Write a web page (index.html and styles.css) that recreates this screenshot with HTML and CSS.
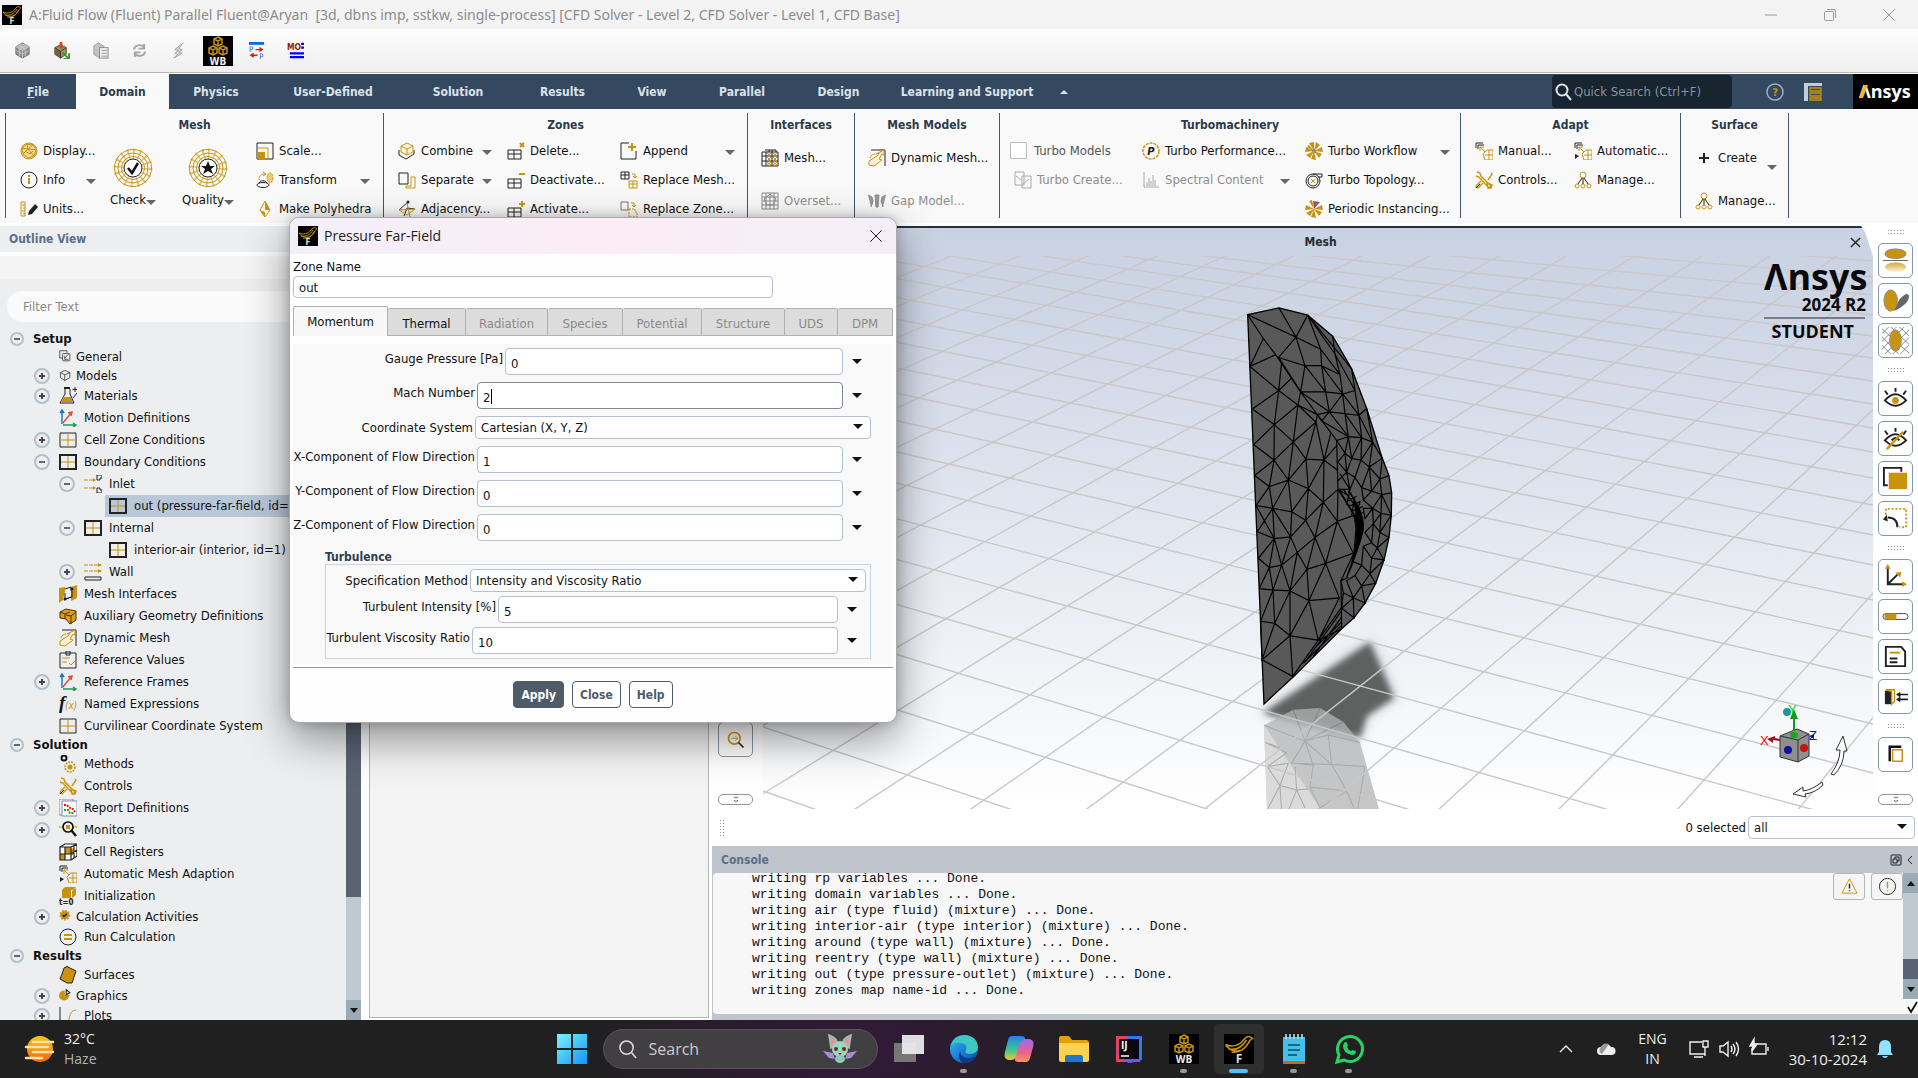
FILE: index.html
```html
<!DOCTYPE html>
<html lang="en">
<head>
<meta charset="utf-8">
<title>A:Fluid Flow (Fluent) Parallel Fluent@Aryan</title>
<link rel="stylesheet" href="styles.css">
</head>
<body>
<svg class="defs" aria-hidden="true">
  <defs>
    <linearGradient id="sky" x1="0" y1="0" x2="0" y2="1"><stop offset="0" stop-color="#cad1e2"/><stop offset=".15" stop-color="#ced5e5"/><stop offset="1" stop-color="#ffffff"/></linearGradient>
    <linearGradient id="fade" x1="0" y1="0" x2="0" y2="1"><stop offset="0" stop-color="#d8a63a"/><stop offset="1" stop-color="#fbf3df"/></linearGradient>
    <linearGradient id="win" x1="0" y1="0" x2="1" y2="1"><stop offset="0" stop-color="#7df0ff"/><stop offset="1" stop-color="#1495f5"/></linearGradient>
    <linearGradient id="edge" x1="0" y1="0" x2="1" y2="1"><stop offset="0" stop-color="#35c1f1"/><stop offset=".5" stop-color="#1b7fd8"/><stop offset="1" stop-color="#0c4a9e"/></linearGradient>
    <linearGradient id="cop1" x1="0" y1="0" x2="0" y2="1"><stop offset="0" stop-color="#2a7de8"/><stop offset=".6" stop-color="#3fc88c"/><stop offset="1" stop-color="#f2c230"/></linearGradient>
    <linearGradient id="cop2" x1="0" y1="0" x2="0" y2="1"><stop offset="0" stop-color="#9b6cf0"/><stop offset=".6" stop-color="#f0608a"/><stop offset="1" stop-color="#f49a4a"/></linearGradient>
    <linearGradient id="sun" x1="0" y1="0" x2="0" y2="1"><stop offset="0" stop-color="#fcc419"/><stop offset="1" stop-color="#f0660c"/></linearGradient>
    <filter id="soft"><feGaussianBlur stdDeviation="7"/></filter>
  </defs>
</svg>
<svg class="sprites" aria-hidden="true">
  <symbol id="i-fluent" viewBox="0 0 20 20"><rect width="20" height="20" fill="#000"/><path class="g" d="M1 7c4 2 9 1 12-3s5-2 6-1c-2 0-3 5-6 7S4 12 1 7M3 10c5 1 9-1 12-6M5 12c5 1 9-2 12-7"/><text x="10" y="19" font-size="8" font-weight="700" fill="#ddd" text-anchor="middle">F</text></symbol>
  <symbol id="i-wb" viewBox="0 0 30 30"><rect width="30" height="30" fill="#000"/><path class="g" stroke-width="1.5" d="M15 1l4 2v5l-4 2-4-2V3zM15 5v5M11 3l4 2 4-2M10 10l4 2v5l-4 2-4-2v-5zM10 14v5M6 12l4 2 4-2M20 10l4 2v5l-4 2-4-2v-5zM20 14v5M16 12l4 2 4-2"/><text x="15" y="29" font-size="10" font-weight="700" fill="#eee" text-anchor="middle">WB</text></symbol>
  <symbol id="i-cube" viewBox="0 0 18 18"><path d="M9 1l7 4v8l-7 4-7-4V5z" fill="#8e8e8e" stroke="#6f6f6f"/><path d="M9 1l7 4-7 4-7-4z" fill="#b5b5b5"/><path d="M2 5l7 4 7-4M9 9v8M2 9l7 4 7-4M5 3l7 4v8M13 3L6 7v8" fill="none" stroke="#d5d5d5" stroke-width=".7"/></symbol>
  <symbol id="i-cube-c" viewBox="0 0 18 18"><path d="M8 3l6 3v7l-6 4-6-4V6z" fill="#a39468" stroke="#4d4330"/><path d="M2 6l6 4v7l-6-4z" fill="#6f6444"/><path d="M2 6l6 4 6-4M8 10v7" stroke="#3f3626" fill="none"/><path d="M7 0h3v4h3l-4 4-4-4h2z" fill="#c4502c"/><path d="M10 11l6 6m1-5v6h-6" stroke="#27a327" stroke-width="2" fill="none"/></symbol>
  <symbol id="i-cube-g" viewBox="0 0 18 18"><path d="M7 1l6 4v8l-5 4-6-4V4z" fill="#c4c4c4" stroke="#999"/><rect x="8" y="6" width="9" height="11" fill="#f0f0f0" stroke="#888"/><path d="M10 9h6M10 12h6M10 15h6" stroke="#999"/></symbol>
  <symbol id="i-refresh" viewBox="0 0 18 18"><path d="M3 8c1-5 7-6 10-3V3M15 10c-1 5-7 6-10 3v2M8 7h6V2M10 11H4v5" fill="none" stroke="#a5a5a5" stroke-width="2"/></symbol>
  <symbol id="i-bolt" viewBox="0 0 18 18"><path d="M14 1L5 8l4 1-4 3 3 1-4 4 9-5-4-1 4-3-4-1z" fill="#ddd" stroke="#a0a0a0"/></symbol>
  <symbol id="i-pp" viewBox="0 0 18 18"><path d="M1 0h16v3H1z" fill="#0a6fd0"/><path d="M8 8h6m-2-2l3 2-3 2M10 14H4m2-2l-3 2 3 2" stroke="#e11" fill="none" stroke-width="1.4"/><text x="1" y="11" font-size="8" fill="#06c">P</text><text x="12" y="18" font-size="8" fill="#06c">P</text></symbol>
  <symbol id="i-mo" viewBox="0 0 18 18"><text x="0" y="8" font-size="9" font-weight="700" fill="#8b2500">MO</text><path d="M15 2h3M15 6h3M3 12h15M3 16h15" stroke="#00f" stroke-width="2.4"/></symbol>
  <symbol id="i-ball" viewBox="0 0 18 18"><circle cx="9" cy="9" r="8" fill="#f0d79c" stroke="#c8930f"/><path class="g" d="M2 6l5-4 6 1 3 5-2 6-6 2-5-4zM7 2l1 5 5-4M8 7L3 12M8 7l6 7M8 7l8 1M2 6l6 1M5 9l5 3 3-3"/></symbol>
  <symbol id="i-info" viewBox="0 0 18 18"><circle class="k" cx="9" cy="9" r="8"/><path d="M9 7v6M9 4v2" stroke="#c8930f" stroke-width="2"/></symbol>
  <symbol id="i-units" viewBox="0 0 18 18"><path class="g" d="M1 2h4v14H1zM2 5h3M3 8h2M2 11h3M3 14h2"/><path class="kf" d="M8 15l1-4 6-7 3 3-6 7z"/></symbol>
  <symbol id="i-check" viewBox="0 0 40 40"><g class="g"><circle cx="20" cy="20" r="18.500"/><circle cx="20" cy="20" r="15"/><circle cx="20" cy="20" r="11.500"/><path stroke-dasharray="1.500 4" stroke-width="11" d="M20 6a14 14 0 0 1 0 28a14 14 0 0 1 0-28" opacity=".55"/></g><circle cx="20" cy="20" r="9" fill="#fff" stroke="#222"/><path d="M15 20l4 5 6-10" fill="none" stroke="#111" stroke-width="2.500"/></symbol>
  <symbol id="i-quality" viewBox="0 0 40 40"><g class="g"><circle cx="20" cy="20" r="18.500"/><circle cx="20" cy="20" r="15"/><circle cx="20" cy="20" r="11.500"/><path stroke-dasharray="1.500 4" stroke-width="11" d="M20 6a14 14 0 0 1 0 28a14 14 0 0 1 0-28" opacity=".55"/></g><circle cx="20" cy="20" r="9" fill="#fff" stroke="#222"/><path d="M20 13l2 5h5l-4 3 2 5-5-3-5 3 2-5-4-3h5z" fill="#111"/></symbol>
  <symbol id="i-scale" viewBox="0 0 18 18"><path class="k" d="M1 1h16v16H1z"/><path class="g" d="M1 6h11v11"/><path class="gf" d="M1 10h8v7H1z"/></symbol>
  <symbol id="i-transform" viewBox="0 0 18 18"><ellipse class="k" cx="7" cy="14" rx="6" ry="2.500"/><path class="k" d="M3 12c1-3 7-3 8 0"/><path class="g" d="M3 9c0-4 2-6 6-6m-2-2l3 2-3 2"/><ellipse cx="14" cy="7" rx="3" ry="5" fill="#e9c877" stroke="#c8930f" stroke-dasharray="2 1"/></symbol>
  <symbol id="i-poly" viewBox="0 0 18 18"><path class="g" d="M9 1l5 9-5 7-5-7z"/><path class="gf" d="M9 1l5 9H9zM9 12v5l-5-7z"/></symbol>
  <symbol id="i-combine" viewBox="0 0 18 18"><path class="k" d="M1 8v5l7 4 8-5V8"/><path d="M9 1l6 3v6l-6 3-6-3V4z" fill="#fdf3d8"/><path class="g" d="M9 1l6 3v6l-6 3-6-3V4zM3 4l6 3 6-3M9 7v6"/></symbol>
  <symbol id="i-separate" viewBox="0 0 18 18"><path class="k" d="M1 2h9v11H1z"/><path class="g" d="M13 6h4v11H8v-2h5z"/></symbol>
  <symbol id="i-adj" viewBox="0 0 18 18"><path class="k" d="M1 10l9-8M6 16l3-8 8 1"/><path class="g" d="M1 10l16-1-8 6zM9 3l3 14"/><circle class="kf" cx="10" cy="2" r="1.500"/></symbol>
  <symbol id="i-cellx" viewBox="0 0 18 18"><path class="k" d="M1 8h13v9H1zM1 12h13M7 8v9"/><path class="g" stroke-width="2" d="M13 1l4 4m0-4l-4 4"/></symbol>
  <symbol id="i-cellm" viewBox="0 0 18 18"><path class="k" d="M1 8h13v9H1zM1 12h13M7 8v9"/><path class="g" stroke-width="2" d="M12 3h6"/></symbol>
  <symbol id="i-cellp" viewBox="0 0 18 18"><path class="k" d="M1 8h13v9H1zM1 12h13M7 8v9"/><path class="g" stroke-width="2" d="M12 4h6M15 1v6"/></symbol>
  <symbol id="i-append" viewBox="0 0 18 18"><path class="k" d="M9 1H1v16h15V9"/><path class="g" stroke-width="2" d="M12 1v8M8 5h8"/></symbol>
  <symbol id="i-repm" viewBox="0 0 18 18"><path class="k" d="M1 1h8v7H1zM1 4h8M5 1v7"/><path class="g" d="M12 3h3v4m-2-2l2 2 2-2M9 10h8v7H9zM9 13h8M13 10v7"/></symbol>
  <symbol id="i-repz" viewBox="0 0 18 18"><path class="k" d="M1 2h7v8H1z" opacity=".6"/><path class="g" d="M11 3h3v3m-2-1l2 2 2-2"/><path class="g" stroke-dasharray="2 1" d="M9 9h6v3h2v5H9z"/></symbol>
  <symbol id="i-imesh" viewBox="0 0 18 18"><path class="k" d="M1 3h4v14H1zM1 7h16M1 12h16M5 3h12v14H5M4 1h11v2M8 1v2M11 1v2M11 3v14"/><path class="g" d="M6 4l4 3m0-3L6 7M12 4l4 3m0-3l-4 3M6 8l4 4m0-4l-4 4M12 8l4 4m0-4l-4 4M6 13l4 3m0-3l-4 3M12 13l4 3m0-3l-4 3"/></symbol>
  <symbol id="i-overset" viewBox="0 0 18 18"><path d="M1 1h16v16H1zM1 5h16M1 9h16M1 13h16M5 1v16M9 1v16M13 1v16M3 7l6-5 6 5-3 6H6z" fill="none" stroke="#888"/></symbol>
  <symbol id="i-dyn" viewBox="0 0 18 18"><path class="k" d="M3 1h14v16"/><path d="M1 16v-4l8-5 2-3-3 1 8-4v5l-2-1-3 5 3 1-8 6z" fill="#fbf0d2"/><path class="g" d="M1 16v-4l8-5 2-3-3 1 8-4v5l-2-1-3 5 3 1-8 6zM2 9c1-3 3-4 5-4"/></symbol>
  <symbol id="i-gap" viewBox="0 0 18 18"><path d="M0 3l4 2 1 4-2 6M18 3l-4 2-1 4 2 6M7 3l4 0-1 12H8z" fill="#999" stroke="#888"/></symbol>
  <symbol id="i-tcreate" viewBox="0 0 18 18"><path d="M1 1h9v13H1zM8 5h9v12H8zM2 5l5 4M9 13l6-5" fill="none" stroke="#aaa"/></symbol>
  <symbol id="i-tperf" viewBox="0 0 18 18"><circle cx="9" cy="9" r="8" fill="none" stroke="#c8930f" stroke-width="1.500" stroke-dasharray="3 1"/><text x="9" y="13" font-size="11" font-style="italic" font-weight="700" text-anchor="middle" fill="#222">P</text></symbol>
  <symbol id="i-spec" viewBox="0 0 18 18"><path d="M2 1v15h15M5 15v-4M7 15V7M9 15v-5M11 15V4M13 15v-6" fill="none" stroke="#aaa"/></symbol>
  <symbol id="i-fan" viewBox="0 0 18 18"><path class="gf" d="M9 9L4 1l5-1zM9 9l2-9 4 3zM9 9l8-4 1 5zM9 9l8 3-3 4zM9 9l2 9-5-1zM9 9l-4 7-4-3zM9 9L0 10l1-5zM9 9L2 5l2-2z"/><circle cx="9" cy="9" r="2" fill="#8b8b8b"/></symbol>
  <symbol id="i-fanp" viewBox="0 0 18 18"><path class="gf" d="M9 9L4 1l3-1zM9 9l8-4 1 5zM9 9l8 3-3 4zM9 9l2 9-5-1zM9 9l-4 7-4-3zM9 9L0 10l1-5z"/><path d="M9 9L8 1l7 1z" fill="#96527a"/></symbol>
  <symbol id="i-topo" viewBox="0 0 18 18"><circle class="k" cx="8" cy="10" r="7"/><circle class="k" cx="8" cy="10" r="5"/><path class="k" d="M8 3h9v3h-4"/><path class="g" d="M6 8l4 4m0-4l-4 4"/></symbol>
  <symbol id="i-adapt" viewBox="0 0 18 18"><path class="k" d="M8 1H1v5M9 3H3v4"/><path class="g" d="M5 5l5 5M5 9V5h4M8 12l4-4h6v10h-8zM10 13h8M14 8v10"/></symbol>
  <symbol id="i-adapta" viewBox="0 0 18 18"><path class="k" d="M8 1H1v5M9 3H3v4"/><path class="g" d="M5 5l5 5M5 9V5h4M8 12l4-4h6v10h-8zM10 13h8M14 8v10"/><path class="kf" d="M1 12l4 2-4 3z"/></symbol>
  <symbol id="i-tools" viewBox="0 0 18 18"><path class="g" d="M2 1l3 1 1 3 10 10-2 2L4 6 1 5M16 2l1 1-4 6M8 12l-5 5-2-1 1-2 4-4M12 12l5 2-1 3-3 0z" stroke-width="1.400"/><path class="k" d="M5 13l-4 4"/></symbol>
  <symbol id="i-manage" viewBox="0 0 18 18"><circle class="g" cx="9" cy="4" r="3"/><circle class="g" cx="3" cy="15" r="2"/><circle class="g" cx="9" cy="15" r="2"/><circle class="g" cx="15" cy="15" r="2"/><path class="k" d="M8 7l-4 6M9 7v6M10 7l4 6"/></symbol>
  <symbol id="i-plus" viewBox="0 0 18 18"><path d="M9 4v10M4 9h10" stroke="#222" stroke-width="2"/></symbol>
  <symbol id="i-general" viewBox="0 0 18 18"><path class="k" d="M5 11H1V1h10v3"/><rect class="k" x="5" y="5" width="10" height="10" rx="1"/><path class="k" d="M13 6l-5 5v2h5M8 11V8"/></symbol>
  <symbol id="i-models" viewBox="0 0 18 18"><path class="k" d="M8 2l7 3v7l-7 4-6-4V5zM2 5l6 3 7-3M8 8v8"/></symbol>
  <symbol id="i-materials" viewBox="0 0 18 18"><path class="kf" d="M5 0h6v2H5z"/><path class="k" d="M6 2v5l-5 9h14l-4-9V2"/><path class="gf" d="M4 10h8l2 5H2z"/><path class="k" d="M16 0v5M13.500 2.500h5M18 6l-4 5"/></symbol>
  <symbol id="i-axes" viewBox="0 0 18 18"><path d="M3 15V2M1 4l2-3 2 3" stroke="#1173c4" fill="none" stroke-width="1.400"/><path d="M4 14L12 4M9 4l4-1-1 4" stroke="#e8483c" fill="none" stroke-width="1.400"/><path d="M4 16h12M14 14l3 2-3 2" stroke="#16a04c" fill="none" stroke-width="1.400"/></symbol>
  <symbol id="i-cell" viewBox="0 0 18 18"><path class="k" d="M1 2h16v14H1z"/><path class="g" d="M1 9h16M9 2v14"/></symbol>
  <symbol id="i-cellb" viewBox="0 0 18 18"><path class="k" stroke-width="2" d="M1 2h16v14H1z"/><path class="g" d="M2 9h14M9 3v12"/></symbol>
  <symbol id="i-inlet" viewBox="0 0 18 18"><path class="g" stroke-dasharray="4 1" d="M0 5h11M0 13h11"/><path class="gf" d="M9 3l3 2-3 2zM9 11l3 2-3 2z"/><path class="k" d="M13 0h5v3h-2v2h-3zM13 18h5v-3h-2v-2h-3z"/></symbol>
  <symbol id="i-wall" viewBox="0 0 18 18"><path class="g" stroke-dasharray="4 1" d="M0 2h17M0 8h17"/><path class="gf" d="M14 0l4 2-4 2zM14 6l4 2-4 2z"/><path class="k" d="M1 14h16v3H1z"/></symbol>
  <symbol id="i-minter" viewBox="0 0 18 18"><path class="gf" d="M0 3l6-1v4L4 15l-4 3zM12 2l6-2v13l-6 3z"/><path class="k" d="M6 4l6-2v4M5 15l7-3M6 8v6l7-2V6"/><circle class="kf" cx="6" cy="14" r="1.500"/><circle class="kf" cx="13" cy="4" r="1.500"/></symbol>
  <symbol id="i-aux" viewBox="0 0 18 18"><path d="M1 5l6-3 10 2v9l-6 4-4-5-6-1z" fill="#dc9d1c" stroke="#4d3500"/><path d="M1 5l5 2 5-2M6 7v5M7 8l5 1 5-4M12 9v8" fill="none" stroke="#4d3500"/></symbol>
  <symbol id="i-clip" viewBox="0 0 18 18"><path class="k" d="M1 2h16v15H1zM7 0h4v4H7z"/><path class="g" d="M3 7h8M3 11h5M10 12l2 2 4-4"/></symbol>
  <symbol id="i-fx" viewBox="0 0 18 18"><text x="0" y="14" font-size="19" font-style="italic" font-weight="700" font-family="Liberation Serif, serif" fill="#111">f</text><text x="6" y="14" font-size="10" font-style="italic" fill="#c8930f">(x)</text></symbol>
  <symbol id="i-methods" viewBox="0 0 18 18"><circle cx="5" cy="3" r="2.500" fill="none" stroke="#111" stroke-width="2"/><circle cx="11" cy="12" r="5" fill="none" stroke="#c8930f" stroke-width="1.500" stroke-dasharray="2 1"/><circle class="gf" cx="11" cy="12" r="2.500"/></symbol>
  <symbol id="i-report" viewBox="0 0 18 18"><path d="M0 0h14v16H0z" fill="none" stroke="#7b8fa5"/><path d="M3 2h15v15H3z" fill="#fff" stroke="#7b8fa5"/><path d="M5 6h2l2 1 2 2 3 1 2 3" fill="none" stroke="#e11" stroke-width="2" stroke-dasharray="2 1"/><path d="M5 11h4l2 3h4" fill="none" stroke="#1a1" stroke-width="2" stroke-dasharray="2 1"/></symbol>
  <symbol id="i-monitor" viewBox="0 0 18 18"><path class="g" d="M0 6h3M15 6h3"/><circle cx="9" cy="6" r="5" fill="none" stroke="#111" stroke-width="1.700"/><path d="M12 9l5 6" stroke="#111" stroke-width="2.400"/><path class="gf" d="M7 4h4v4H7z"/></symbol>
  <symbol id="i-reg" viewBox="0 0 18 18"><path d="M1 4l5-3h12v12l-6 4H1z" fill="#fff"/><path class="gf" d="M6 4h6v7H6zM1 11h5v6H1zM12 6l3-1v6l-3 2z"/><path class="k" stroke-width="1.200" d="M1 4h11v13H1zM1 4l5-3h12v12l-6 4M12 4l6-3M6 4v13M1 11h11l6-4M15 3v12"/></symbol>
  <symbol id="i-init" viewBox="0 0 18 18"><path class="gf" d="M3 3l3-3h11l-3 3zM3 3h9v8H3zM13 4l4-3v7l-4 3z"/><text x="0" y="18" font-size="8" font-weight="700" fill="#222">t=0</text></symbol>
  <symbol id="i-calc" viewBox="0 0 18 18"><circle cx="8" cy="7" r="6" fill="#c8930f" stroke="#c8930f" stroke-width="3" stroke-dasharray="2 2"/><path d="M5 7l2 2 4-4" stroke="#111" stroke-width="1.800" fill="none"/></symbol>
  <symbol id="i-run" viewBox="0 0 18 18"><circle class="k" cx="9" cy="9" r="8"/><path d="M5 7h8M5 11h8" stroke="#c8930f" stroke-width="2"/></symbol>
  <symbol id="i-surf" viewBox="0 0 18 18"><path d="M5 2q3-3 6 0l6 3-2 6-2 6-5 0-7-4 2-5z" fill="#c8930f" stroke="#222"/></symbol>
  <symbol id="i-graph" viewBox="0 0 18 18"><circle class="gf" cx="7" cy="9" r="7"/><path d="M8 1h7v7H8z" fill="#eceef0"/><path class="k" stroke-width="1.500" d="M10 1l5 4-5 3z"/></symbol>
  <symbol id="i-plots" viewBox="0 0 18 18"><path class="k" d="M1 0v18"/><path class="g" d="M6 18c6 0 2-15 11-15"/></symbol>
</svg>

<header class="titlebar">
  <svg class="logo"><use href="#i-fluent"/></svg>
  <h1>A:Fluid Flow (Fluent) Parallel Fluent@Aryan&nbsp; [3d, dbns imp, sstkw, single-process] [CFD Solver - Level 2, CFD Solver - Level 1, CFD Base]</h1>
  <div class="winctl">
    <button aria-label="Minimize"><svg viewBox="0 0 12 12"><path d="M0 6h12"/></svg></button>
    <button aria-label="Restore"><svg viewBox="0 0 12 12"><rect x=".5" y="2.500" width="9" height="9" rx="1"/><path d="M3 .5h7q1.500 0 1.500 1.500v7"/></svg></button>
    <button aria-label="Close window"><svg viewBox="0 0 12 12"><path d="M.5.5l11 11m0-11l-11 11"/></svg></button>
  </div>
</header>

<div class="quickbar">
  <button aria-label="Mesh"><svg><use href="#i-cube"/></svg></button>
  <button aria-label="Import"><svg><use href="#i-cube-c"/></svg></button>
  <button aria-label="Report"><svg><use href="#i-cube-g"/></svg></button>
  <button aria-label="Refresh"><svg><use href="#i-refresh"/></svg></button>
  <button aria-label="Run"><svg><use href="#i-bolt"/></svg></button>
  <button aria-label="Workbench" class="wb"><svg><use href="#i-wb"/></svg></button>
  <button aria-label="Parameters"><svg><use href="#i-pp"/></svg></button>
  <button aria-label="Monitors list"><svg><use href="#i-mo"/></svg></button>
</div>

<nav class="tabs">
  <div class="tablist">
    <button><u>F</u>ile</button><button class="on">Domain</button><button>Physics</button><button>User-Defined</button><button>Solution</button><button>Results</button><button>View</button><button>Parallel</button><button>Design</button><button>Learning and Support</button><button class="up" aria-label="Collapse ribbon"></button>
  </div>
  <label class="qsearch"><svg viewBox="0 0 18 18"><circle cx="8" cy="7" r="5.500"/><path d="M12 11l5 6"/></svg><input aria-label="Quick Search" placeholder="Quick Search (Ctrl+F)"></label>
  <button class="tabicon" aria-label="Help topics"><svg viewBox="0 0 18 18"><circle cx="9" cy="9" r="8" fill="none" stroke="#9bb0c4" stroke-width="1.500"/><text x="9" y="13" text-anchor="middle" font-size="11" font-weight="700" fill="#c8930f">?</text></svg></button>
  <button class="tabicon" aria-label="Layout"><svg viewBox="0 0 18 18"><path d="M0 0h18v3H0zM0 3h4v15H0z" fill="#c3ccd6"/><path d="M6 5h11v3H6zM6 10h11v3H6zM6 15h11v2H6z" fill="none" stroke="#c8930f" stroke-width="1.300"/></svg></button>
  <div class="brand"><svg viewBox="0 0 56 24"><text x="1" y="18" font-size="18" font-weight="700" fill="#fff">Λnsys</text><path d="M1 18L6 5h4L5 18z" fill="#fdb515"/></svg></div>
</nav>

<section class="ribbon">
  <div class="group g-mesh"><h2>Mesh</h2><div class="cols">
    <div class="col"><button><svg><use href="#i-ball"/></svg>Display...</button><button class="dd"><svg><use href="#i-info"/></svg>Info</button><button><svg><use href="#i-units"/></svg>Units...</button></div>
    <button class="big"><svg><use href="#i-check"/></svg><span class="dd">Check</span></button>
    <button class="big"><svg><use href="#i-quality"/></svg><span class="dd">Quality</span></button>
    <div class="col"><button><svg><use href="#i-scale"/></svg>Scale...</button><button class="dd"><svg><use href="#i-transform"/></svg>Transform</button><button><svg><use href="#i-poly"/></svg>Make Polyhedra</button></div>
  </div></div>
  <div class="group g-zones"><h2>Zones</h2><div class="cols">
    <div class="col"><button class="dd"><svg><use href="#i-combine"/></svg>Combine</button><button class="dd"><svg><use href="#i-separate"/></svg>Separate</button><button><svg><use href="#i-adj"/></svg>Adjacency...</button></div>
    <div class="col"><button><svg><use href="#i-cellx"/></svg>Delete...</button><button><svg><use href="#i-cellm"/></svg>Deactivate...</button><button><svg><use href="#i-cellp"/></svg>Activate...</button></div>
    <div class="col"><button class="dd"><svg><use href="#i-append"/></svg>Append</button><button><svg><use href="#i-repm"/></svg>Replace Mesh...</button><button><svg><use href="#i-repz"/></svg>Replace Zone...</button></div>
  </div></div>
  <div class="group g-inter two"><h2>Interfaces</h2><div class="cols">
    <div class="col"><button><svg><use href="#i-imesh"/></svg>Mesh...</button><button disabled><svg><use href="#i-overset"/></svg>Overset...</button></div>
  </div></div>
  <div class="group g-models two"><h2>Mesh Models</h2><div class="cols">
    <div class="col"><button><svg><use href="#i-dyn"/></svg>Dynamic Mesh...</button><button disabled><svg><use href="#i-gap"/></svg>Gap Model...</button></div>
  </div></div>
  <div class="group g-turbo"><h2>Turbomachinery</h2><div class="cols">
    <div class="col"><label class="tick"><input type="checkbox">Turbo Models</label><button disabled><svg><use href="#i-tcreate"/></svg>Turbo Create...</button></div>
    <div class="col"><button><svg><use href="#i-tperf"/></svg>Turbo Performance...</button><button disabled class="dd"><svg><use href="#i-spec"/></svg>Spectral Content</button></div>
    <div class="col"><button class="dd"><svg><use href="#i-fan"/></svg>Turbo Workflow</button><button><svg><use href="#i-topo"/></svg>Turbo Topology...</button><button><svg><use href="#i-fanp"/></svg>Periodic Instancing...</button></div>
  </div></div>
  <div class="group g-adapt"><h2>Adapt</h2><div class="cols">
    <div class="col"><button><svg><use href="#i-adapt"/></svg>Manual...</button><button><svg><use href="#i-tools"/></svg>Controls...</button></div>
    <div class="col"><button><svg><use href="#i-adapta"/></svg>Automatic...</button><button><svg><use href="#i-manage"/></svg>Manage...</button></div>
  </div></div>
  <div class="group g-surface two"><h2>Surface</h2><div class="cols">
    <div class="col"><button class="dd low"><svg><use href="#i-plus"/></svg>Create</button><button><svg><use href="#i-manage"/></svg>Manage...</button></div>
  </div></div>
</section>

<main>
  <aside class="outline">
    <h2>Outline View</h2>
    <div class="strip"></div>
    <div class="treewrap">
      <div class="treepane">
        <input class="filter" aria-label="Filter Text" placeholder="Filter Text">
        <ul class="tree">
          <li class="head"><button class="ex minus" aria-label="Collapse"></button>Setup</li>
          <li class="sm"><svg><use href="#i-general"/></svg>General</li>
          <li class="sm"><button class="ex" aria-label="Expand"></button><svg><use href="#i-models"/></svg>Models</li>
          <li><button class="ex" aria-label="Expand"></button><svg><use href="#i-materials"/></svg>Materials</li>
          <li><svg><use href="#i-axes"/></svg>Motion Definitions</li>
          <li><button class="ex" aria-label="Expand"></button><svg><use href="#i-cell"/></svg>Cell Zone Conditions</li>
          <li><button class="ex minus" aria-label="Collapse"></button><svg><use href="#i-cellb"/></svg>Boundary Conditions</li>
          <li class="l2"><button class="ex minus" aria-label="Collapse"></button><svg><use href="#i-inlet"/></svg>Inlet</li>
          <li class="l3"><span class="sel"><svg><use href="#i-cellb"/></svg>out (pressure-far-field, id=4)</span></li>
          <li class="l2"><button class="ex minus" aria-label="Collapse"></button><svg><use href="#i-cellb"/></svg>Internal</li>
          <li class="l3"><span><svg><use href="#i-cellb"/></svg>interior-air (interior, id=1)</span></li>
          <li class="l2"><button class="ex" aria-label="Expand"></button><svg><use href="#i-wall"/></svg>Wall</li>
          <li><svg><use href="#i-minter"/></svg>Mesh Interfaces</li>
          <li><svg><use href="#i-aux"/></svg>Auxiliary Geometry Definitions</li>
          <li><svg><use href="#i-dyn"/></svg>Dynamic Mesh</li>
          <li><svg><use href="#i-clip"/></svg>Reference Values</li>
          <li><button class="ex" aria-label="Expand"></button><svg><use href="#i-axes"/></svg>Reference Frames</li>
          <li><svg><use href="#i-fx"/></svg>Named Expressions</li>
          <li><svg><use href="#i-cell"/></svg>Curvilinear Coordinate System</li>
          <li class="head"><button class="ex minus" aria-label="Collapse"></button>Solution</li>
          <li><svg><use href="#i-methods"/></svg>Methods</li>
          <li><svg><use href="#i-tools"/></svg>Controls</li>
          <li><button class="ex" aria-label="Expand"></button><svg><use href="#i-report"/></svg>Report Definitions</li>
          <li><button class="ex" aria-label="Expand"></button><svg><use href="#i-monitor"/></svg>Monitors</li>
          <li><svg><use href="#i-reg"/></svg>Cell Registers</li>
          <li><svg><use href="#i-adapta"/></svg>Automatic Mesh Adaption</li>
          <li><svg><use href="#i-init"/></svg>Initialization</li>
          <li class="sm"><button class="ex" aria-label="Expand"></button><svg><use href="#i-calc"/></svg>Calculation Activities</li>
          <li><svg><use href="#i-run"/></svg>Run Calculation</li>
          <li class="head"><button class="ex minus" aria-label="Collapse"></button>Results</li>
          <li><svg><use href="#i-surf"/></svg>Surfaces</li>
          <li class="sm"><button class="ex" aria-label="Expand"></button><svg><use href="#i-graph"/></svg>Graphics</li>
          <li><button class="ex" aria-label="Expand"></button><svg><use href="#i-plots"/></svg>Plots</li>
        </ul>
      </div>
      <div class="sbar"><div class="thumb"></div><div class="track"></div><button class="down" aria-label="Scroll down"></button></div>
    </div>
  </aside>

  <div class="taskpage"></div>

  <div class="work">
    <div class="viewrow">
      <div class="ltools"><button class="tool" aria-label="Zoom to fit"><svg viewBox="0 0 24 24"><circle class="g" cx="10" cy="10" r="7" stroke-width="2"/><path d="M15 15l6 6" stroke="#222" stroke-width="2"/><path class="g" d="M6 10h8m-3-3l3 3-3 3"/></svg></button><button class="more" aria-label="More"><svg viewBox="0 0 8 10"><path class="k" d="M1 1l3 2 3-2M1 6l3 2 3-2"/></svg></button></div>
      <div class="view">
        <svg class="scene" viewBox="763 226 1110 583" preserveAspectRatio="xMidYMid slice">
          <rect x="763" y="226" width="1110" height="583" fill="url(#sky)"/>
          <clipPath id="floor"><rect x="763" y="255" width="1110" height="554"/></clipPath>
          <g clip-path="url(#floor)">
            <path d="M1261 712L1370 640 1396 697 1366 716 1361 738z" fill="#555" filter="url(#soft)" opacity=".25"/>
            <path class="shadow" d="M1263 712L1370 641 1394 697 1367 715 1360 737z"/>
            <g fill="#b2b3b4" opacity=".75" transform="translate(1180 280) scale(.3333 .3444)">
              <path d="M252 1290L340 1245 420 1240 490 1280 540 1340 605 1560H262z"/>
              <path d="M252 1290L420 1530 262 1560z" fill="#cfcfcf"/>
              <path d="M252 1290L375 1336 340 1245M375 1336L490 1280M375 1336L420 1240M375 1336L445 1318 540 1340M445 1318L455 1404 375 1336 335 1400 400 1406 375 1336M335 1400L455 1404 555 1410M400 1406L390 1470 500 1480 455 1404M390 1470L420 1530 500 1480 530 1550 555 1410M262 1410L320 1370 256 1340 300 1355M262 1410L300 1465 325 1400 262 1410M300 1465L262 1535M300 1465L305 1545M300 1465L350 1478 345 1410M350 1478L375 1530M350 1478L320 1550M350 1478L385 1475" fill="none" stroke="#8f8f8f" stroke-width="3"/>
            </g>
            <path class="grid" d="M763 174L1873 260M763 182L1873 276M763 191L1873 294M763 197L1873 314M763 202L1873 335M763 206L1873 357M763 213L1873 380M763 225L1873 403M763 238L1873 427M763 254L1873 451M763 272L1873 477M763 293L1873 504M763 315L1873 534M763 340L1873 564M763 364L1873 599M763 390L1873 637M763 420L1873 677M763 449L1873 723M763 483L1873 772M763 522L1873 825M763 565L1873 885M763 613L1873 949M763 666L1873 1021M763 726L1016 810M763 790L820 810"/>
            <path class="grid" d="M2865-504L-920 810M2865-504L-802 810M2865-504L-684 810M2865-504L-566 810M2865-504L-448 810M2865-504L-330 810M2865-504L-211 810M2865-504L-92 810M2865-504L26 810M2865-504L144 810M2865-504L262 810M2865-504L380 810M2865-504L500 810M2865-504L617 810M2865-504L735 810M2865-504L852 810M2865-504L968 810M2865-504L1084 810M2865-504L1202 810M2865-504L1320 810M2865-504L1437 810M2865-504L1557 810M2865-504L1676 810M2865-504L1797 810M2865-504L1918 810M2865-504L2038 810"/>
          </g>
          <g class="body" transform="translate(1180 280) scale(.3333 .3444)">
            <path class="hull" d="M203 98L297 78 383 99 458 160 515 255 560 370 607 515 627 565 635 615 634 680 627 745 612 810 587 878 555 935 522 978 485 1010 345 1145 252 1228z"/>
            <path d="M203 98L250 167 287 214 362 322 412 388 470 463 474 605 523 680 528 720 522 790 483 870 485 1010"/>
            <path d="M203 98L348 163 297 78M348 163L383 99M348 163L296 222 375 246 348 163 422 198 383 99 465 212 458 160M422 198L425 246 375 246 362 322 296 222M425 246L480 272 465 212 525 318 515 255M425 246L437 322 375 246M437 322L362 322 M437 322L488 328 425 246M480 272L488 328 525 318M437 322L448 380 488 328 495 385 448 380 412 388 M448 380L505 452 495 385 537 390 488 328M525 318L537 390 560 370M362 322L448 380M412 388L425 406 505 452 545 455 495 385M425 406L448 380M537 390L545 455 578 468 560 370M537 390L578 468 607 515M383 99L515 255M422 198L480 272M465 212L480 272"/>
            <path d="M210 248L250 167M210 248L287 214M210 248L296 318 305 235M296 318L335 282M217 372L296 318 283 417 217 372M296 318L354 360 283 417M354 360L362 322M354 360L412 388M354 360L340 467 283 417 221 475 M340 467L408 410 354 360M408 410L412 388M408 410L378 517 340 467 282 520 283 417M408 410L432 520 378 517M432 520L453 440M432 520L470 478M432 520L474 550M221 475L282 520 224 565 268 597 282 520 325 578 340 467M325 578L378 517 385 603 325 578 268 597 228 652 278 660 268 597M278 660L325 578 335 670 278 660 232 728M385 603L335 670M385 603L432 520 430 642 385 603 377 695 335 670 332 743 278 660 283 748 228 652M430 642L474 605M430 642L377 695 405 745 430 642 472 698 523 680M472 698L405 745 437 820 472 698 520 790 437 820 381 837 405 745M472 698L474 605M377 695L332 743 352 788 405 745M352 788L381 837M332 743L283 748 235 805M283 748L305 825 332 743M232 728L283 748 268 832 235 805M352 788L305 825 268 832 238 893M352 788L330 900 305 825 279 897 268 832M381 837L330 900 387 928 381 837M437 820L387 928 478 920 437 820M330 900L279 897 238 893M279 897L284 994 242 988 279 897M330 900L284 994M330 900L330 1030 284 994 246 1100 330 1030M242 988L246 1100M387 928L330 1030 415 1043 387 928M415 1043L478 920M415 1043L483 950M330 1030L338 1148 246 1100M415 1043L338 1148M415 1043L485 1010M380 1100L483 960M400 1090L485 975M410 1060L485 990M370 1110L485 1000"/>
            <path d="M470 463L505 452 495 500 470 463M474 525L495 500 515 515 505 452M515 515L545 455 543 520 515 515 500 555 474 525M543 520L578 468 568 540 543 520 525 570 500 555 474 580M500 555L510 605 474 605M525 570L510 605M525 570L545 600 568 540 607 515 600 575 568 540 575 610 545 600 550 635 575 610 600 575 627 565M600 575L605 620 635 615M575 610L605 620 578 660 550 635M605 620L634 680 603 675 578 660 555 690 550 660 578 660 580 705 603 675 605 620M603 675L600 730 580 705 575 760 555 730 580 705M600 730L634 680M600 730L627 745 592 775 575 760 550 770 575 805 592 775 600 730M592 775L612 810 575 805 570 850 545 825 550 770M570 850L612 810M570 850L587 878 545 885 570 850M545 825L525 855 545 885 520 920 555 935 545 885M525 855L500 870 520 920 485 950 522 978 520 920 490 905 483 870 505 860M490 905L485 950M505 850L520 815 545 825M480 560L510 605M500 620L474 605M495 500L500 555"/>
            <path class="dense" d="M505 610Q560 680 548 730T500 860Q535 780 530 700T505 610z"/>
            <path d="M480 610L530 690M490 605L545 680M500 640L530 625M505 655L542 640M512 670L548 655M518 685L550 672M510 605L500 650M525 625L515 680M540 640L525 700"/>
          </g>
          <g class="triad">
            <path d="M1780 735l17-7 12 5v22l-11 6-18-5z" fill="#8f8f8f" stroke="#333"/><path d="M1780 735l18 4v22M1798 739l11-6" fill="none" stroke="#333"/>
            <circle cx="1788" cy="749" r="4" fill="#11119b"/><circle cx="1804" cy="747" r="4" fill="#c41414"/><ellipse cx="1794" cy="734" rx="4" ry="3" fill="#1aa51a"/>
            <path d="M1793 730v-12h-3l4-10 4 10h-3v12z" fill="#0d9a1d"/><path d="M1780 740l-7-1v3l-6-4 8-3v2l5 1z" fill="#a01020"/><path d="M1809 735l5-2v5z" fill="#11119b"/><circle cx="1787" cy="711" r="4" fill="#1b9a9a"/>
            <text x="1760" y="744" fill="#f00">X</text><text x="1788" y="713" fill="#0d0">Y</text><text x="1809" y="739" fill="#1111d0">Z</text>
            <path d="M1831 773q9-12 9-24h-4l7-14 4 15h-3q0 14-10 24zM1822 781q-10 8-19 9v-4l-10 7 13 3-1-3q10-1 18-9z" fill="#fff" stroke="#333"/>
          </g>
          <g class="badge"><text x="1764" y="289" font-size="36">Λnsys</text><text x="1866" y="310" text-anchor="end" font-size="17">2024 R2</text><path d="M1764 317h101" stroke="#222"/><text x="1854" y="337" text-anchor="end" font-size="18">STUDENT</text></g>
        </svg>
        <div class="viewtitle"><h2>Mesh</h2><button aria-label="Close view"><svg viewBox="0 0 12 12"><path d="M1 1l10 10M11 1L1 11" stroke="#222" stroke-width="1.600"/></svg></button></div>
      </div>
      <div class="rtools">
        <i class="dots"></i>
        <button class="tool" aria-label="Reflections"><svg viewBox="0 0 28 28"><ellipse cx="14" cy="7" rx="11" ry="5" fill="#c8930f" stroke="#888"/><path d="M1 14h26" stroke="#666"/><ellipse cx="14" cy="21" rx="11" ry="5" fill="url(#fade)"/></svg></button>
        <button class="tool" aria-label="Shadows"><svg viewBox="0 0 28 28"><path d="M12 25L18 13q8-9 10-4 0 9-16 16z" fill="#666"/><ellipse cx="9" cy="14" rx="7" ry="11" fill="#c8930f" stroke="#888"/></svg></button>
        <button class="tool" aria-label="Grid"><svg viewBox="0 0 28 28"><path d="M-1 8L8-1M-1 16L16-1M-1 24L24-1M2 29L29 2M10 29L29 10M18 29L29 18M-1 18L10 29M-1 9L18 29M-1 1L29 28M8-1L29 19M17-1L29 10" stroke="#888"/><ellipse cx="14" cy="14" rx="6" ry="11" fill="#c8930f" stroke="#888"/></svg></button>
        <i class="dots"></i>
        <button class="tool" aria-label="Show"><svg viewBox="0 0 28 28"><path class="k" stroke-width="2" d="M3 16q11-13 22 0-11 11-22 0zM14 3v4M3 6l3 4M25 6l-3 4"/><circle class="gf" cx="14" cy="16" r="3.500"/></svg></button>
        <button class="tool" aria-label="Hide"><svg viewBox="0 0 28 28"><path class="k" stroke-width="2" d="M3 16q11-13 22 0-11 11-22 0zM14 3v4M3 6l3 4M25 6l-3 4M10 16q4-5 8 0"/><path class="g" stroke-width="2.500" d="M5 25L22 7"/></svg></button>
        <button class="tool" aria-label="Transparency"><svg viewBox="0 0 28 28"><path class="k" stroke-width="2" d="M6 21H2V3h18v4"/><path class="gf" d="M7 8h19v17H7z"/></svg></button>
        <button class="tool" aria-label="Select area"><svg viewBox="0 0 28 28"><path d="M4 14V4h21v19h-7" fill="none" stroke="#c8930f" stroke-width="2" stroke-dasharray="2 2"/><path class="k" stroke-width="2" d="M16 23q0-10-10-10"/><path class="kf" d="M1 15l4-5 1 7z"/></svg></button>
        <i class="dots"></i>
        <button class="tool" aria-label="Axes"><svg viewBox="0 0 28 28"><path class="k" stroke-width="2" d="M6 5v17h16M6 22L16 12"/><path class="gf" d="M6 1l3 5H3zM26 22l-5 3v-6zM20 9l-1 6-5-5z"/></svg></button>
        <button class="tool" aria-label="Ruler"><svg viewBox="0 0 28 28"><rect x="1" y="11" width="26" height="6" rx="3" fill="#fff" stroke="#444"/><path d="M4 11h11v6H4q-3-3 0-6z" fill="#c8930f"/></svg></button>
        <button class="tool" aria-label="Title"><svg viewBox="0 0 28 28"><path class="k" stroke-width="2" d="M4 4h16l4 5v15H4z"/><path class="k" stroke-width="2" d="M8 16h8M8 20h8"/><path class="g" stroke-width="2" d="M8 10h11"/></svg></button>
        <button class="tool" aria-label="Boundary markers"><svg viewBox="0 0 28 28"><path class="kf" d="M3 8h7v14H3z"/><path class="g" stroke-width="1.500" d="M4 7h9v12l-3 3V9z"/><path class="k" stroke-width="1.600" d="M17 12h10M17 17h10M19 10l-3 2 3 2M19 15l-3 2 3 2"/></svg></button>
        <i class="dots"></i>
        <button class="tool" aria-label="Copy"><svg viewBox="0 0 28 28"><path d="M8 21V6h12" fill="none" stroke="#111" stroke-width="2.500"/><path class="g" stroke-width="1.600" d="M11 9h10v12H11z"/></svg></button>
        <button class="more" aria-label="More tools"><svg viewBox="0 0 8 10"><path class="k" d="M1 1l3 2 3-2M1 6l3 2 3-2"/></svg></button>
      </div>
    </div>
    <div class="status"><i class="grip"></i><label for="selall">0 selected</label><span class="combo"><select id="selall"><option>all</option></select></span></div>
    <section class="console">
      <div class="chead"><h2>Console</h2><button aria-label="Float"><svg viewBox="0 0 12 12"><rect class="k" x="1" y="1" width="10" height="10" rx="1"/><path class="k" d="M3 5h4v4H3zM5 5V3h4v4H7"/></svg></button><button aria-label="Collapse console"><svg viewBox="0 0 12 12"><path class="k" d="M8 2L4 6l4 4"/></svg></button></div>
      <div class="cbody">
<pre>writing rp variables ... Done.
writing domain variables ... Done.
writing air (type fluid) (mixture) ... Done.
writing interior-air (type interior) (mixture) ... Done.
writing around (type wall) (mixture) ... Done.
writing reentry (type wall) (mixture) ... Done.
writing out (type pressure-outlet) (mixture) ... Done.
writing zones map name-id ... Done.</pre>
        <div class="alerts"><button aria-label="Warnings"><svg viewBox="0 0 20 20"><path class="g" d="M10 2l8 15H2z"/><path class="k" stroke-width="1.500" d="M10 7v5M10 14v1"/></svg></button><button aria-label="Errors"><svg viewBox="0 0 20 20"><circle class="k" cx="10" cy="10" r="8.500"/><path class="g" stroke-width="1.500" d="M10 5v7M10 14v1"/></svg></button></div>
        <div class="sbar cs"><button class="upb" aria-label="Scroll up"></button><div class="track"></div><div class="thumb"></div><button class="down" aria-label="Scroll to end"></button><span class="mark"><svg viewBox="0 0 12 12"><path d="M2 6l3 5 6-10" fill="none" stroke="#111" stroke-width="1.800"/></svg></span></div>
      </div>
    </section>
  </div>
</main>

<footer class="taskbar">
  <div class="weather"><svg viewBox="0 0 30 30"><circle cx="15" cy="15" r="13" fill="url(#sun)"/><path d="M8 8h20M1 13h22M8 18h20M1 24h16" stroke="#fbe3b0" stroke-width="2.500" stroke-linecap="round"/></svg><p>32°C<span>Haze</span></p></div>
  <div class="apps">
    <button aria-label="Start"><svg viewBox="0 0 30 30"><path d="M0 0h14v14H0zM16 0h14v14H16zM0 16h14v14H0zM16 16h14v14H16z" fill="url(#win)"/></svg></button>
    <label class="wsearch"><svg viewBox="0 0 20 20"><circle cx="9" cy="8" r="7"/><path d="M14 13l5 6"/></svg><input aria-label="Search" placeholder="Search"><svg class="bat" viewBox="0 0 34 28"><path d="M6 0q9 3 8 10l-6 3zM28 0q-9 3-8 10l6 3z" fill="#e78fa0" stroke="#8fc7b4"/><path d="M0 16l10 2 2 6-6-1zM34 16l-10 2-2 6 6-1z" fill="#a78fd0"/><circle cx="17" cy="14" r="8" fill="#9ad6c0"/><ellipse cx="17" cy="24" rx="5" ry="4" fill="#8cc9b3"/><circle cx="13" cy="14" r="2" fill="#6b2b1c"/><circle cx="21" cy="14" r="2" fill="#6b2b1c"/><path d="M15 18h4l-2 2z" fill="#c23"/></svg></label>
    <button aria-label="Task view"><svg viewBox="0 0 30 30"><path d="M0 9h22v19H0z" fill="#777"/><path d="M8 1h22v19H8z" fill="#eee" opacity=".92"/></svg></button>
    <button class="run" aria-label="Edge"><svg viewBox="0 0 30 30"><circle cx="15" cy="15" r="14" fill="url(#edge)"/><path d="M2 11Q6 1 16 1q12 1 13 12 0 7-9 7-5-1-3-4 2-6-5-7-6-1-10 2z" fill="#3fc7c3"/><path d="M11 17q1 8 11 7l5-2q-5 8-13 7-6-4-3-12z" fill="#0d3c86"/></svg></button>
    <button aria-label="Copilot"><svg viewBox="0 0 30 30"><path d="M22 28h-8q-4 0-3-5l4-14q1-4 5-4h5q6 1 4 8l-3 11q-1 4-4 4z" fill="url(#cop2)"/><path d="M8 2h10q3 0 3 3l-2 2q-3 0-4 4l-3 11q-1 4-5 4H5q-6-1-4-8L4 6q1-4 4-4z" fill="url(#cop1)"/></svg></button>
    <button aria-label="File Explorer"><svg viewBox="0 0 30 30"><path d="M0 4q0-2 2-2h8l3 4h14q3 0 3 3v4H0z" fill="#e3a008"/><path d="M0 9h30v17q0 2-2 2H2q-2 0-2-2z" fill="#ffd24d"/><path d="M6 28v-5q0-2 2-2h14q2 0 2 2v5z" fill="#1d78c9"/></svg></button>
    <button aria-label="IntelliJ IDEA"><svg viewBox="0 0 30 30"><path d="M2 2h12l14 4-2 22H2z" fill="#e8415c"/><path d="M14 2h14v24l-12 3z" fill="#2f7af0"/><path d="M2 16l12 13 12-2z" fill="#6b57e8"/><rect x="5" y="5" width="20" height="20" fill="#0b0612"/><text x="7" y="15" font-size="10" font-weight="700" fill="#fff">IJ</text><path d="M7 22h8" stroke="#fff" stroke-width="1.500"/></svg></button>
    <button class="run" aria-label="Workbench app"><svg><use href="#i-wb"/></svg></button>
    <button class="run active" aria-label="Fluent app"><svg><use href="#i-fluent"/></svg></button>
    <button class="run" aria-label="Notepad"><svg viewBox="0 0 30 30"><path d="M4 3h22v24H4z" fill="#45bfe6"/><path d="M4 27h22v3H4z" fill="#c66a1e"/><path d="M7 0v5M11 0v5M15 0v5M19 0v5M23 0v5" stroke="#bfeaf8" stroke-width="1.500"/><path d="M9 11h12M9 16h12M9 21h9" stroke="#126a8c" stroke-width="2"/></svg></button>
    <button class="run" aria-label="WhatsApp"><svg viewBox="0 0 30 30"><path d="M3 28l2-7A12.500 12.500 0 1 1 10 26z" fill="#202020" stroke="#25d366" stroke-width="3"/><path d="M10 9q2-2 3 0l1 2-1 2q1 3 4 4l2-1 3 1q0 4-4 4-9-2-9-9z" fill="#25d366"/></svg></button>
  </div>
  <div class="tray">
    <svg class="t" viewBox="0 0 20 20"><path d="M4 13l6-6 6 6"/></svg>
    <svg class="c" viewBox="0 0 20 20"><path d="M5 16a4 4 0 0 1 0-8 6 6 0 0 1 10 0 4 4 0 0 1 1 8z" fill="#eee"/><path d="M5 8a6 6 0 0 1 8-3L6 15a4 4 0 0 1-1-7z" fill="#999"/></svg>
    <p class="lang">ENG<br>IN</p>
    <svg class="t" viewBox="0 0 20 20"><path d="M13 3H1v12h15v-4M5 18h9M14 2h5v6h-5zM16 8v9"/></svg>
    <svg class="t" viewBox="0 0 20 20"><path d="M1 7h3l5-4v14l-5-4H1zM12 7q2 3 0 6M14 5q4 5 0 10M17 3q5 7 0 14"/></svg>
    <svg class="t" viewBox="0 0 20 20"><path d="M7 5h10v10H3V9M19 8v4"/><path d="M5 0L1 7h3l-1 5 5-7H5z" fill="#eee"/></svg>
    <p class="clock">12:12<br>30-10-2024</p>
    <svg class="bell" viewBox="0 0 16 20"><path d="M8 1q6 0 6 7v5l2 3H0l2-3V8q0-7 6-7zM5 17h6q-3 4-6 0z" fill="#8fe3ff"/></svg>
  </div>
</footer>

<form class="dialog" role="dialog" aria-labelledby="dlgt" onsubmit="return false">
  <div class="dtitle"><svg><use href="#i-fluent"/></svg><h2 id="dlgt">Pressure Far-Field</h2><button type="button" aria-label="Close dialog"><svg viewBox="0 0 12 12"><path d="M.5.5l11 11m0-11l-11 11" stroke="#222"/></svg></button></div>
  <div class="zone"><label for="zn">Zone Name</label><input id="zn" value="out"></div>
  <div class="dtabs"><button type="button" class="on">Momentum</button><button type="button">Thermal</button><button type="button" disabled>Radiation</button><button type="button" disabled>Species</button><button type="button" disabled>Potential</button><button type="button" disabled>Structure</button><button type="button" disabled>UDS</button><button type="button" disabled>DPM</button></div>
  <div class="panel">
    <div class="row wide"><label for="f1">Gauge Pressure [Pa]</label><input id="f1" value="0"><button type="button" class="car" aria-label="Options"></button></div>
    <div class="row focus"><label for="f2">Mach Number</label><span class="edit"><input id="f2" value="2"></span><button type="button" class="car" aria-label="Options"></button></div>
    <div class="row pick"><label for="f3">Coordinate System</label><span class="combo"><select id="f3"><option>Cartesian (X, Y, Z)</option></select></span></div>
    <div class="row"><label for="f4">X-Component of Flow Direction</label><input id="f4" value="1"><button type="button" class="car" aria-label="Options"></button></div>
    <div class="row"><label for="f5">Y-Component of Flow Direction</label><input id="f5" value="0"><button type="button" class="car" aria-label="Options"></button></div>
    <div class="row"><label for="f6">Z-Component of Flow Direction</label><input id="f6" value="0"><button type="button" class="car" aria-label="Options"></button></div>
    <h3>Turbulence</h3>
    <div class="box">
      <div class="row pick"><label for="f7">Specification Method</label><span class="combo"><select id="f7"><option>Intensity and Viscosity Ratio</option></select></span></div>
      <div class="row wide"><label for="f8">Turbulent Intensity [%]</label><input id="f8" value="5"><button type="button" class="car" aria-label="Options"></button></div>
      <div class="row"><label for="f9">Turbulent Viscosity Ratio</label><input id="f9" value="10"><button type="button" class="car" aria-label="Options"></button></div>
    </div>
  </div>
  <div class="actions"><button class="primary">Apply</button><button type="button">Close</button><button type="button">Help</button></div>
</form>
</body>
</html>
```
FILE: styles.css
```css
* { box-sizing: border-box; }
html, body { height: 100%; }
body {
  margin: 0; display: flex; flex-direction: column; overflow: hidden;
  background: #fff; color: #111;
  font: 13px/16px "DejaVu Sans Condensed", "Noto Sans", sans-serif;
}
h1, h2, h3, p, ul, pre { margin: 0; padding: 0; }
h2, h3 { font-size: 12px; }
ul { list-style: none; }
button, input, select { font: inherit; color: inherit; margin: 0; }
button { background: none; border: 0; padding: 0; }
svg { display: block; flex: none; overflow: visible; }
.defs { position: absolute; width: 0; height: 0; }
.sprites { display: none; }
.g { fill: none; stroke: #c8930f; }
.gf { fill: #c8930f; }
.k { fill: none; stroke: #222; }
.kf { fill: #222; }

/* title bar */
.titlebar { display: flex; align-items: center; height: 29px; background: #f3f3f3; flex: none; padding-left: 2px; }
.titlebar .logo { width: 20px; height: 20px; margin-right: 7px; }
.titlebar h1 { flex: 1; font: 14px/20px "Noto Sans", "Open Sans", sans-serif; color: #8c8c8c; white-space: nowrap; }
.winctl { display: flex; }
.winctl button { width: 59px; display: flex; justify-content: center; }
.winctl svg { width: 12px; height: 12px; fill: none; stroke: #999; }

.quickbar { flex: none; display: flex; align-items: center; height: 44px; padding-left: 3px; background: linear-gradient(#fdfdfd, #efefef); border-bottom: 1px solid #b9b6b0; margin-bottom: 1px; }
.quickbar button { width: 39px; display: flex; justify-content: center; }
.quickbar svg { width: 17px; height: 17px; }
.quickbar .wb svg { width: 30px; height: 30px; }

/* ribbon tabs */
.tabs { flex: none; display: flex; height: 35px; background: #34495f; color: #dbe2ea; align-items: center; }
.tablist { display: grid; height: 100%; flex: 1; grid-template-columns: 76px 93px 94px 140px 110px 99px 80px 100px 93px 164px 30px; }
.tablist button { font-weight: 700; font-size: 12px; }
.tablist .on { background: #f9f9f9; color: #2a3b4d; }
.tablist .up::after { content: ""; display: inline-block; border: 4px solid transparent; border-bottom-color: #dbe2ea; border-top: 0; vertical-align: middle; }
.qsearch { display: flex; align-items: center; width: 180px; height: 33px; background: #182430; border-radius: 4px; margin-right: 34px; }
.qsearch svg { width: 18px; height: 18px; margin: 0 2px; fill: none; stroke: #dfe5ea; stroke-width: 2; }
.qsearch input { background: none; border: 0; padding: 0; width: 150px; outline: 0; }
.qsearch input::placeholder { color: #8a939c; opacity: 1; }
.tabicon { margin-right: 20px; }
.tabicon svg { width: 18px; height: 18px; }
.brand { width: 65px; height: 35px; background: #000; display: flex; align-items: center; justify-content: center; margin-left: 11px; font-family: "Open Sans", sans-serif; }
.brand svg { width: 56px; height: 24px; }

/* ribbon */
.ribbon { flex: none; display: flex; height: 114px; padding: 4px 0 0 5px; background: #f9f9f9; }
.group { flex: none; height: 105px; overflow: hidden; border-left: 1px solid #44566a; }
.group:last-child { border-right: 1px solid #44566a; }
.group h2 { line-height: 24px; text-align: center; color: #2b3949; }
.cols { display: grid; margin-top: -1px; }
.col { display: flex; flex-direction: column; }
.col > * { display: flex; align-items: center; height: 29px; gap: 5px; white-space: nowrap; text-align: left; }
.col svg { width: 18px; height: 18px; }
.two .col > * { height: 43px; }
.col button:disabled, .tick { color: #555; }
.col button:disabled { color: #8d8d8d; }
.dd::after { content: ""; border: 5px solid transparent; border-top-color: #666; border-bottom: 0; margin-left: auto; margin-top: 4px; }
.big { display: flex; flex-direction: column; align-items: center; padding-top: 12px; gap: 4px; }
.big svg { width: 40px; height: 40px; }
.big .dd { display: flex; align-items: center; }
.g-mesh { width: 378px; } .g-mesh .cols { padding-left: 14px; grid-template-columns: 84px 58px 92px 116px; }
.g-mesh .col .dd { padding-right: 8px; } .g-mesh .col:last-child .dd { padding-right: 0; }
.g-mesh .col:last-child { padding-left: 2px; }
.g-zones { width: 364px; } .g-zones .cols { padding-left: 14px; grid-template-columns: 109px 113px 115px; }
.g-zones .col:first-child .dd { padding-right: 15px; }
.g-inter { width: 107px; } .g-inter .cols { padding-left: 13px; }
.g-models { width: 145px; } .g-models .cols { padding-left: 13px; }
.g-turbo { width: 461px; } .g-turbo .cols { padding-left: 10px; grid-template-columns: 132px 163px 145px; }
.g-turbo .col:nth-child(2) .dd { padding-right: 15px; }
.tick input { width: 17px; height: 17px; margin: 0 2px 0 0; appearance: none; border: 1px solid #bbb; background: #fff; border-radius: 1px; }
.g-turbo .col:first-child button { padding-left: 4px; }
.g-adapt { width: 220px; } .g-adapt .cols { padding-left: 14px; grid-template-columns: 99px 100px; }
.g-surface { width: 109px; } .g-surface .cols { padding: 0 11px 0 14px; }
.g-surface .dd::after { margin-top: 20px; }

main { flex: 1; min-height: 0; display: flex; padding-top: 3px; }

/* outline tree */
.outline { width: 361px; flex: none; display: flex; flex-direction: column; background: #eceef0; }
.outline h2 { line-height: 26px; padding-left: 9px; color: #5c6f88; }
.strip { height: 27px; background: #f4f4f4; border-top: 4px solid #fdfdfd; flex: none; }
.treewrap { flex: 1; min-height: 0; display: flex; }
.treepane { flex: 1; min-width: 0; overflow: hidden; padding-top: 12px; }
.filter { display: block; width: 330px; height: 31px; margin: 0 0 9px 7px; padding: 0 16px; border: 0; border-radius: 16px; background: #fafafa; outline: 0; }
.filter::placeholder { color: #8a8a8a; opacity: 1; }
.tree li { display: flex; align-items: center; height: 22px; padding-left: 34px; white-space: nowrap; }
.tree svg { width: 18px; height: 18px; margin-right: 7px; }
.tree li > svg:first-child { margin-left: 25px; }
.tree .head { height: 16px; padding-left: 10px; font-weight: 700; }
.tree .sm { height: 19px; }
.tree .sm svg { width: 13px; height: 13px; margin-right: 4px; }
.tree .l2 { padding-left: 59px; }
.tree .l3 { padding-left: 105px; }
.l3 span { display: flex; align-items: center; flex: 1; height: 22px; padding-left: 4px; }
.l3 .sel { background: #b9c8d9; }
.ex { width: 16px; height: 16px; margin-right: 9px; border: 2px solid #b5bfc8; border-radius: 50%; flex: none; background: linear-gradient(#445, #445) center / 6px 2px no-repeat, linear-gradient(#445, #445) center / 2px 6px no-repeat; }
.ex.minus { background: linear-gradient(#667, #667) center / 6px 2px no-repeat; }
.head .ex { width: 14px; height: 14px; }

.sbar { width: 15px; flex: none; display: flex; flex-direction: column; background: #c0c9d0; }
.sbar .thumb { flex: 618; background: #5b6274; }
.sbar .track { flex: 103; }
.sbar button { height: 20px; background: #9babb5; display: flex; align-items: center; justify-content: center; flex: none; }
.down::after, .upb::after { content: ""; border: 4px solid transparent; border-top: 5px solid #111; border-bottom: 0; }
.upb::after { border-top: 0; border-bottom: 5px solid #111; }

.taskpage { width: 340px; flex: none; margin: 0 0 2px 8px; background: #f3f3f3; border: 1px solid #b5b5b5; }

/* graphics area */
.work { flex: 1; min-width: 0; display: flex; flex-direction: column; padding-left: 3px; }
.viewrow { flex: 1; min-height: 0; display: flex; }
.ltools { width: 51px; flex: none; display: flex; flex-direction: column; justify-content: flex-end; align-items: center; gap: 37px; padding: 0 4px 4px 0; }
.view { flex: 1; min-width: 0; position: relative; overflow: hidden; border-top: 2px solid #27313b; clip-path: polygon(0 0, calc(100% - 12px) 0, calc(100% - 8px) 6px, 100% 30px, 100% 100%, 0 100%); }
.scene { width: 100%; height: 100%; }
.viewtitle { position: absolute; top: 0; left: 0; right: 0; height: 28px; display: flex; align-items: center; }
.viewtitle h2 { flex: 1; text-align: center; color: #222b36; padding-left: 28px; }
.viewtitle button { padding-right: 12px; }
.viewtitle svg { width: 11px; height: 11px; }
.grid { fill: none; stroke: #c8c8c8; stroke-width: 1.400; }
.shadow { fill: #5f6161; filter: blur(3px); }
.body path { fill: none; stroke: #000; stroke-width: 3.500; }
.body .hull { fill: #595959; stroke-width: 4; }
.body .dense { fill: #000; }
.triad text { font: 13px "Liberation Sans", sans-serif; }
.badge { font-family: "Open Sans", sans-serif; font-weight: 700; fill: #0a0a0a; }
.rtools { width: 45px; flex: none; display: flex; flex-direction: column; align-items: center; gap: 5px; padding-bottom: 4px; margin-top: -1px; }
.tool { width: 35px; height: 35px; flex: none; border: 1px solid #8797a6; border-radius: 5px; background: #fff; display: flex; align-items: center; justify-content: center; }
.tool svg { width: 27px; height: 27px; overflow: hidden; }
.ltools .tool svg { width: 20px; height: 20px; }
.more { width: 35px; height: 11px; flex: none; border: 1px solid #8797a6; border-radius: 5px; background: #fff; display: flex; align-items: center; justify-content: center; }
.more svg { width: 6px; height: 7px; }
.rtools .more { margin-top: auto; }
.dots { width: 18px; height: 5px; margin: 4px 0; flex: none; background: radial-gradient(circle, #999 1px, transparent 1px) 0 0 / 3px 3px; }

.status { height: 37px; flex: none; display: flex; align-items: center; padding: 0 3px 0 7px; gap: 2px; }
.grip { width: 5px; height: 17px; margin-right: auto; background: radial-gradient(circle, #999 1px, transparent 1px) 0 0 / 3px 3px; }
.status .combo { width: 167px; height: 23px; }
.combo { position: relative; display: block; }
.combo select { width: 100%; height: 100%; appearance: none; border: 1px solid #b4bfd2; border-radius: 4px; background: #fff; padding: 0 5px; }
.combo::after { content: ""; position: absolute; right: 8px; top: 8px; border: 5px solid transparent; border-top-color: #111; border-bottom: 0; }

.console { flex: none; height: 174px; background: #bfc4cd; display: flex; flex-direction: column; }
.chead { height: 27px; display: flex; align-items: center; padding-left: 9px; }
.chead h2 { flex: 1; color: #5c6f88; }
.chead button { width: 14px; }
.chead svg { width: 12px; height: 12px; }
.cbody { height: 141px; display: flex; align-items: flex-start; background: #f7f7f7; margin-left: 1px; border-radius: 4px 0 0 4px; overflow: hidden; }
.cbody pre { flex: 1; padding: 0 0 0 39px; margin-top: -2px; font: 13px/16px "Liberation Mono", monospace; }
.alerts { display: flex; gap: 6px; }
.alerts button { width: 32px; height: 27px; border: 1px solid #b5b5b5; border-radius: 3px; background: #f5f5f5; display: flex; align-items: center; justify-content: center; }
.alerts svg { width: 19px; height: 19px; }
.cs { height: 100%; }
.cs .track { flex: 66; } .cs .thumb { flex: 20; }
.mark { height: 15px; padding: 2px 0 0 3px; background: #f7f7f7; }
.mark svg { width: 12px; height: 12px; }

/* taskbar */
.taskbar { flex: none; height: 58px; display: grid; grid-template-columns: 1fr auto 1fr; align-items: center; background: radial-gradient(ellipse 260px 120px at 44% 50%, #34193a, transparent), #202020; color: #eee; font: 14px/20px "Open Sans", "Noto Sans", sans-serif; }
.weather { display: flex; align-items: center; gap: 9px; padding-left: 25px; }
.weather svg { width: 30px; height: 30px; }
.weather span { display: block; color: #b0b0b0; }
.apps { display: flex; align-items: center; padding-left: 7px; }
.apps button { width: 50px; height: 50px; margin-right: 5px; display: flex; align-items: center; justify-content: center; border-radius: 5px; position: relative; }
.apps button svg { width: 30px; height: 30px; }
.run::after { content: ""; position: absolute; bottom: 1px; width: 7px; height: 4px; border-radius: 2px; background: #999; }
.active { background: #2f2f2f; }
.run.active::after { width: 19px; background: #4cc2ff; }
.wsearch { display: flex; align-items: center; width: 275px; height: 40px; margin: 0 6px 0 1px; padding: 0 20px 0 14px; gap: 12px; border: 1px solid #5b525d; border-radius: 20px; background: #423f43; }
.wsearch svg { width: 19px; height: 19px; fill: none; stroke: #ddd; stroke-width: 1.600; }
.wsearch .bat { width: 34px; height: 28px; stroke: none; }
.wsearch input { flex: 1; min-width: 0; border: 0; background: none; outline: 0; padding: 0; font-size: 16px; }
.wsearch input::placeholder { color: #ccc; opacity: 1; }
.tray { display: flex; align-items: center; justify-content: flex-end; padding-right: 25px; gap: 10px; text-align: right; }
.tray .t { width: 20px; height: 20px; fill: none; stroke: #eee; stroke-width: 1.400; }
.tray .c { width: 20px; height: 20px; margin: 0 12px 0 10px; }
.lang { text-align: center; margin-right: 12px; }
.clock { margin-left: 10px; font-size: 15px; }
.bell { width: 16px; height: 20px; }

/* dialog window */
.dialog { position: absolute; left: 289px; top: 217px; width: 608px; background: #fefefe; border: 1px solid #a9a9a9; border-radius: 10px; box-shadow: 0 16px 44px rgba(0, 0, 0, .42), 0 0 12px rgba(0, 0, 0, .2); overflow: hidden; padding-bottom: 14px; }
.dtitle { display: flex; align-items: center; height: 36px; padding: 0 14px 0 8px; background: linear-gradient(90deg, #f3eff9, #fbedf6 50%, #f5eef8); }
.dtitle > svg { width: 20px; height: 20px; }
.dtitle h2 { flex: 1; padding-left: 6px; font: 14px/20px "Open Sans", "Noto Sans", sans-serif; color: #222; }
.dtitle button svg { width: 12px; height: 12px; }
.zone { padding: 5px 3px 8px; display: flex; flex-direction: column; }
.zone label { line-height: 16px; }
.zone input { width: 480px; height: 22px; margin-top: 1px; }
.dialog input { border: 1px solid #b4bfd2; border-radius: 4px; background: #fff; padding: 0 5px; outline: 0; }
.dtabs { display: grid; grid-template-columns: 95fr 78fr 82fr 75fr 79fr 83fr 53fr 55fr; align-items: end; margin: 0 3px; height: 30px; }
.dtabs button { height: 28px; border: 1px solid #b0b0b0; border-left-width: 0; background: #dcdcdc; border-radius: 2px 2px 0 0; padding-top: 3px; color: #111; }
.dtabs button:disabled { color: #8a8a8a; }
.dtabs .on { height: 30px; background: #f7f7f7; border-left-width: 1px; border-bottom: 0; padding-top: 1px; }
.panel { margin: 8px 3px 3px; padding: 4px 0 5px; height: 320px; background: #f9f9f9; }
.row { display: flex; align-items: center; margin-bottom: 7px; padding-right: 50px; height: 27px; position: relative; }
.row label { width: 184px; padding: 0 2px 6px 0; text-align: right; white-space: nowrap; flex: none; }
.row.wide label { width: 212px; }
.row input { flex: 1; min-width: 0; height: 27px; padding-top: 3px; }
.car { width: 27px; height: 20px; margin-right: -27px; flex: none; display: flex; align-items: center; justify-content: center; }
.car::after { content: ""; border: 5px solid transparent; border-top-color: #111; border-bottom: 0; }
.row.pick { height: 23px; padding-right: 22px; }
.row.pick label { width: 182px; padding-bottom: 0; }
.row.pick .combo { flex: 1; height: 23px; }
.edit { flex: 1; display: flex; position: relative; }
.edit::after { content: ""; position: absolute; left: 14px; top: 7px; width: 1px; height: 15px; background: #000; }
.focus input { border-color: #7e8795; }
.panel h3 { margin: 8px 0 0 32px; line-height: 16px; color: #2f3d4d; }
.box { margin: -1px 22px 0 32px; height: 95px; border: 1px solid #ccd3e2; padding-top: 4px; }
.box .row { margin-bottom: 4px; padding-right: 32px; }
.box .row label { width: 146px; }
.box .row.wide label { width: 172px; }
.box .row.pick { padding-right: 4px; }
.box .row.pick label { width: 144px; }
.actions { margin: 0 3px; border-top: 1px solid #999; padding-top: 13px; display: flex; justify-content: center; gap: 8px; }
.actions button { height: 27px; padding: 0 7px; border: 1px solid #505b69; border-radius: 4px; font-weight: 700; font-size: 12px; color: #505b69; background: #fff; }
.actions .primary { background: #505b69; color: #fff; }
```
